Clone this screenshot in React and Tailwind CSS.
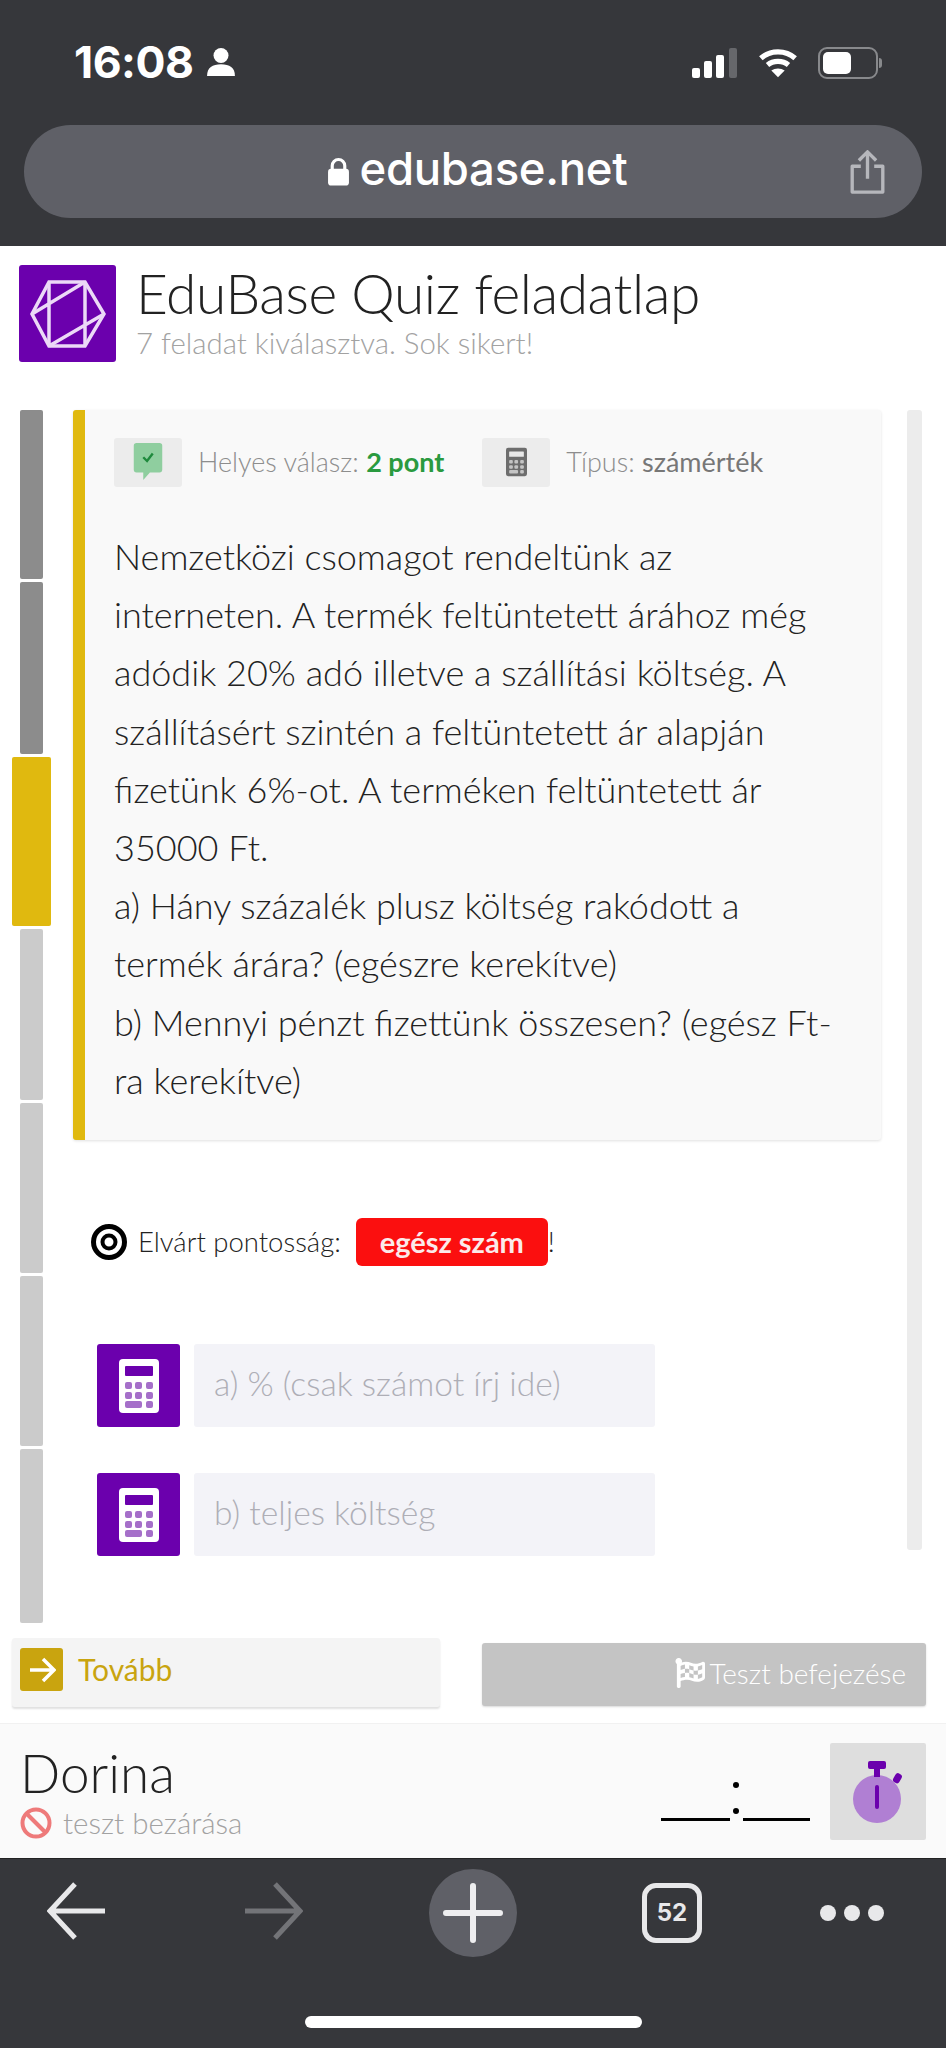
import { FaFlagCheckered } from 'react-icons/fa';

const SEGMENTS = [
  { h: 'h-[169px]', cls: 'bg-[#8c8c8c] mx-[8px]' },
  { h: 'h-[172px]', cls: 'bg-[#8c8c8c] mx-[8px]' },
  { h: 'h-[169px]', cls: 'bg-[#e0b90f] ml-0 mr-0' },
  { h: 'h-[171px]', cls: 'bg-[#cbcbcb] mx-[8px]' },
  { h: 'h-[170px]', cls: 'bg-[#cbcbcb] mx-[8px]' },
  { h: 'h-[170px]', cls: 'bg-[#cbcbcb] mx-[8px]' },
  { h: 'h-[174px]', cls: 'bg-[#cbcbcb] mx-[8px]' },
];

const QUESTION = [
  'Nemzetközi csomagot rendeltünk az',
  'interneten. A termék feltüntetett árához még',
  'adódik 20% adó illetve a szállítási költség. A',
  'szállításért szintén a feltüntetett ár alapján',
  'fizetünk 6%-ot. A terméken feltüntetett ár',
  '35000 Ft.',
  'a) Hány százalék plusz költség rakódott a',
  'termék árára? (egészre kerekítve)',
  'b) Mennyi pénzt fizettünk összesen? (egész Ft-',
  'ra kerekítve)',
];

function CalcIcon({ body = '#fff', screen = '#6b00ad', keys = '#a56fc9', className }) {
  return (
    <svg viewBox="0 0 40 54" className={className}>
      <rect x="0" y="0" width="40" height="54" rx="4" fill={body} />
      <rect x="6" y="7" width="28" height="10" rx="1" fill={screen} />
      {[23, 33].map((y) =>
        [6, 16, 27].map((x) => <rect key={`${x}-${y}`} x={x} y={y} width="7" height="7" rx="2" fill={keys} />)
      )}
      <rect x="6" y="42" width="17" height="7" rx="2" fill={keys} />
      <rect x="27" y="42" width="7" height="7" rx="2" fill={keys} />
    </svg>
  );
}

function AnswerRow({ placeholder }) {
  return (
    <div className="flex h-[83px] gap-[14px]">
      <div className="flex w-[83px] items-center justify-center rounded-[3px] bg-[#6b00ad]">
        <CalcIcon className="h-[54px] w-[40px]" />
      </div>
      <div className="flex w-[461px] items-center rounded-[3px] bg-[#f3f3f8] px-[20px] pb-[4px] text-[33.6px] text-[#aeaeb6]">
        {placeholder}
      </div>
    </div>
  );
}

export default function App() {
  return (
    <div className="flex h-[2048px] w-[946px] flex-col overflow-hidden bg-white font-['Lato',sans-serif] font-light text-[#222]">
      {/* Browser top bar */}
      <div className="flex h-[246px] shrink-0 flex-col bg-[#36373b] px-[24px] font-['Inter',sans-serif] font-normal">
        <div className="flex h-[125px] shrink-0 items-start justify-between pt-[41px] pl-[50px] pr-[38px] text-white">
          <div className="flex items-center gap-[13px]">
            <span className="text-[44.5px] leading-[42px] font-bold tracking-[-0.5px]">16:08</span>
            <svg viewBox="0 0 28 28" className="h-[30px] w-[30px]" fill="#fff">
              <circle cx="14" cy="8" r="7" />
              <path d="M1 27c0-8 5-11 13-11s13 3 13 11z" />
            </svg>
          </div>
          <div className="mt-[6px] mr-[6px] flex items-center gap-[20px]">
            <svg viewBox="0 0 46 30" className="h-[30px] w-[46px]">
              <rect x="0" y="20" width="8" height="10" rx="2" fill="#fff" />
              <rect x="12" y="13" width="8" height="17" rx="2" fill="#fff" />
              <rect x="24" y="7" width="8" height="23" rx="2" fill="#fff" />
              <rect x="37" y="0" width="8" height="30" rx="2" fill="#66676b" />
            </svg>
            <svg viewBox="0 0 42 32" className="h-[32px] w-[40px]" fill="none" stroke="#fff" strokeWidth="5.5">
              <path d="M3 11c10-9 26-9 36 0" />
              <path d="M10 18c6-5 16-5 22 0" />
              <path d="M21 31l-7-7c4-3 10-3 14 0z" fill="#fff" stroke="none" />
            </svg>
            <div className="relative flex h-[32px] w-[60px] items-center rounded-[9px] border-2 border-[#88898c] p-[3px]">
              <div className="h-full w-[28px] rounded-[5px] bg-white" />
              <div className="absolute right-[-6px] h-[10px] w-[3px] rounded-r-full bg-[#88898c]" />
            </div>
          </div>
        </div>
        <div className="relative flex h-[93px] shrink-0 items-center justify-center gap-[10px] rounded-[47px] bg-[#5f6067] pl-[8px] text-white">
          <svg viewBox="0 0 22 28" className="mt-[1px] h-[30px] w-[23px]" fill="#fff">
            <path d="M5 13V8a6 6 0 0 1 12 0v5" fill="none" stroke="#fff" strokeWidth="3" />
            <rect x="1" y="11" width="20" height="16" rx="3" />
          </svg>
          <span className="-mt-[5px] text-[45.5px] leading-[50px] font-medium tracking-[-0.3px]">edubase.net</span>
          <svg viewBox="0 0 36 46" className="absolute right-[37px] h-[44px] w-[35px]" fill="none" stroke="#b6b7bc" strokeWidth="3.5">
            <path d="M18 30V3M9 11l9-9 9 9" />
            <path d="M11 17H2v27h32V17h-9" strokeLinejoin="round" />
          </svg>
        </div>
      </div>

      {/* Page header */}
      <div className="flex h-[164px] shrink-0 gap-[20px] pl-[19px] pt-[19px]">
        <div className="flex h-[97px] w-[97px] items-center justify-center rounded-[3px] bg-[#6b00ad]">
          <svg viewBox="0 0 76 68" className="h-[68px] w-[76px]" fill="none" stroke="#ecd9f7" strokeWidth="3.5">
            <path d="M19 2h36l19 32-19 32H19L2 34z" />
            <path d="M19 2v64M55 2v64M2 34L55 2M19 66l55-32" />
          </svg>
        </div>
        <div className="flex flex-col">
          <h1 className="-mt-[2px] text-[55px] leading-[60px] font-light tracking-[-0.4px] text-[#222]">EduBase Quiz feladatlap</h1>
          <p className="mt-[4px] text-[29.4px] leading-[32px] font-light text-[#a2a2a2]">7 feladat kiválasztva. Sok sikert!</p>
        </div>
      </div>

      {/* Quiz area */}
      <div className="flex h-[1228px] shrink-0 pl-[12px]">
        <div className="flex w-[39px] shrink-0 flex-col gap-[3px]">
          {SEGMENTS.map((s, i) => (
            <div key={i} className={`${s.h} ${s.cls} rounded-[2px]`} />
          ))}
        </div>
        <div className="ml-[22px] flex w-[808px] shrink-0 flex-col">
          <div className="h-[730px] shrink-0 rounded-[3px] border-l-[12px] border-l-[#e0b90f] bg-[#f9f9f9] pl-[29px] pt-[27px] shadow-[0_1px_3px_rgba(0,0,0,0.12)]">
            <div className="flex h-[50px] items-center text-[27px] text-[#8d8d8d]">
              <div className="flex h-[49px] w-[68px] items-center justify-center rounded-[3px] bg-[#ececec]">
                <svg viewBox="0 0 30 40" className="h-[38px] w-[30px]">
                  <path d="M3 0h24a3 3 0 0 1 3 3v25a3 3 0 0 1-3 3H17l-7 8v-8H3a3 3 0 0 1-3-3V3a3 3 0 0 1 3-3z" fill="#8fce9f" />
                  <path d="M10 15l4 4 6-8" fill="none" stroke="#1f8a3d" strokeWidth="2.5" />
                </svg>
              </div>
              <span className="ml-[16px]">Helyes válasz:&nbsp;</span>
              <span className="font-bold text-[#2a9a3f]">2 pont</span>
              <div className="ml-[38px] flex h-[49px] w-[68px] items-center justify-center rounded-[3px] bg-[#ececec]">
                <CalcIcon body="#6d6d6d" screen="#e8e8e8" keys="#c4c4c4" className="h-[32px] w-[21px]" />
              </div>
              <span className="ml-[16px]">Típus:&nbsp;</span>
              <span className="font-normal text-[#777]">számérték</span>
            </div>
            <div className="mt-[40px] text-[36px] leading-[58.2px] font-light text-[#222]">
              {QUESTION.map((line) => (
                <div key={line} className="whitespace-nowrap">{line}</div>
              ))}
            </div>
          </div>

          <div className="mt-[78px] ml-[18px] flex h-[48px] items-center text-[27.5px] font-normal text-[#222]">
            <svg viewBox="0 0 36 36" className="h-[36px] w-[36px]" fill="none" stroke="#000">
              <circle cx="18" cy="18" r="15.5" strokeWidth="5" />
              <circle cx="18" cy="18" r="6.5" strokeWidth="4" />
            </svg>
            <span className="ml-[11px] font-light">Elvárt pontosság:</span>
            <span className="ml-[15px] flex h-[48px] w-[192px] items-center justify-center rounded-[6px] bg-[#fb0f0f] text-[29px] font-bold text-[#fbeaea]">
              egész szám
            </span>
            <span className="font-light">!</span>
          </div>

          <div className="mt-[78px] ml-[24px] flex flex-col gap-[46px]">
            <AnswerRow placeholder="a) % (csak számot írj ide)" />
            <AnswerRow placeholder="b) teljes költség" />
          </div>
        </div>
        <div className="ml-[26px] h-[1140px] w-[15px] shrink-0 rounded-[3px] bg-[#ececec]" />
      </div>

      {/* Action buttons */}
      <div className="flex h-[85px] shrink-0 items-start gap-[42px] pl-[12px]">
        <div className="flex h-[69px] w-[428px] items-start gap-[15px] rounded-[3px] bg-[#f4f4f4] pl-[8px] pt-[10px] shadow-[0_2px_2px_rgba(0,0,0,0.12)]">
          <div className="flex h-[43px] w-[43px] items-center justify-center rounded-[3px] bg-[#c9a40f]">
            <svg viewBox="0 0 28 28" className="h-[28px] w-[28px]" fill="none" stroke="#fff" strokeWidth="3.5">
              <path d="M2 14h23M15 3l11 11-11 11" />
            </svg>
          </div>
          <span className="mt-[1px] text-[30px] leading-[40px] font-normal text-[#c9a40f]">Tovább</span>
        </div>
        <div className="mt-[5px] flex h-[63px] w-[444px] items-center justify-end gap-[5px] rounded-[3px] bg-[#c4c4c4] pb-[3px] pr-[20px] text-[28px] text-white shadow-[0_1px_2px_rgba(0,0,0,0.15)]">
          <FaFlagCheckered className="h-[30px] w-[30px]" />
          <span>Teszt befejezése</span>
        </div>
      </div>

      {/* User footer */}
      <div className="flex h-[135px] shrink-0 border-t border-[#f1f1f1] bg-[#fafafa] pl-[20px] pr-[20px]">
        <div className="flex flex-col pt-[19px]">
          <div className="text-[53px] leading-[60px] font-light text-[#222]">Dorina</div>
          <div className="mt-[3px] flex items-center gap-[11px] text-[29.5px] leading-[34px] font-light text-[#a2a2a2]">
            <svg viewBox="0 0 32 32" className="h-[32px] w-[32px]" fill="none" stroke="#ee7a7a" strokeWidth="4">
              <circle cx="16" cy="16" r="13.5" />
              <path d="M7 7l18 18" />
            </svg>
            <span>teszt bezárása</span>
          </div>
        </div>
        <div className="ml-auto mt-[19px] mr-[20px] flex h-[97px] flex-col items-center justify-end pb-[19px] text-black">
          <div className="mb-[4px] flex flex-col gap-[20px]">
            <span className="h-[6px] w-[6px] rounded-full bg-black" />
            <span className="h-[6px] w-[6px] rounded-full bg-black" />
          </div>
          <div className="flex gap-[13px]">
            <span className="h-[3px] w-[69px] bg-black" />
            <span className="h-[3px] w-[67px] bg-black" />
          </div>
        </div>
        <div className="mt-[19px] flex h-[97px] w-[96px] items-center justify-center rounded-[2px] bg-[#dedede]">
          <svg viewBox="0 0 50 62" className="h-[62px] w-[50px]">
            <circle cx="24" cy="38" r="24" fill="#b07fd3" />
            <rect x="15" y="0" width="18" height="8" rx="2" fill="#6b00ad" />
            <rect x="21" y="6" width="6" height="10" fill="#6b00ad" />
            <rect x="41" y="12" width="7" height="10" rx="3" transform="rotate(30 44 17)" fill="#6b00ad" />
            <rect x="22" y="24" width="4" height="24" rx="2" fill="#6b00ad" />
          </svg>
        </div>
      </div>

      {/* Browser bottom bar */}
      <div className="relative flex-1 border-t border-[#222] bg-[#36373b]">
        <div className="flex h-[100px] items-center pt-[8px]">
          <div className="mb-[4px] ml-[47px] w-[62px]">
            <svg viewBox="0 0 60 58" className="h-[58px] w-[60px]" fill="none" stroke="#e8e8ea" strokeWidth="5">
              <path d="M58 29H5M28 2L3 29l25 27" />
            </svg>
          </div>
          <div className="mb-[4px] ml-[134px] w-[62px]">
            <svg viewBox="0 0 60 58" className="h-[58px] w-[60px]" fill="none" stroke="#737478" strokeWidth="5">
              <path d="M2 29h53M32 2l25 27-25 27" />
            </svg>
          </div>
          <div className="ml-[124px] flex h-[88px] w-[88px] items-center justify-center rounded-full bg-[#5f6067]">
            <svg viewBox="0 0 60 60" className="h-[60px] w-[60px]" stroke="#eeeef0" strokeWidth="6" strokeLinecap="round">
              <path d="M30 3v54M3 30h54" />
            </svg>
          </div>
          <div className="ml-[125px] flex h-[60px] w-[60px] items-center justify-center rounded-[14px] border-[5px] border-[#e8e8ea] font-['Inter',sans-serif] text-[24px] font-bold text-[#e8e8ea]">
            52
          </div>
          <div className="ml-[118px] flex gap-[8px]">
            <span className="h-[16px] w-[16px] rounded-full bg-[#e8e8ea]" />
            <span className="h-[16px] w-[16px] rounded-full bg-[#e8e8ea]" />
            <span className="h-[16px] w-[16px] rounded-full bg-[#e8e8ea]" />
          </div>
        </div>
        <div className="absolute bottom-[20px] left-[305px] h-[12px] w-[337px] rounded-full bg-white" />
      </div>
    </div>
  );
}
